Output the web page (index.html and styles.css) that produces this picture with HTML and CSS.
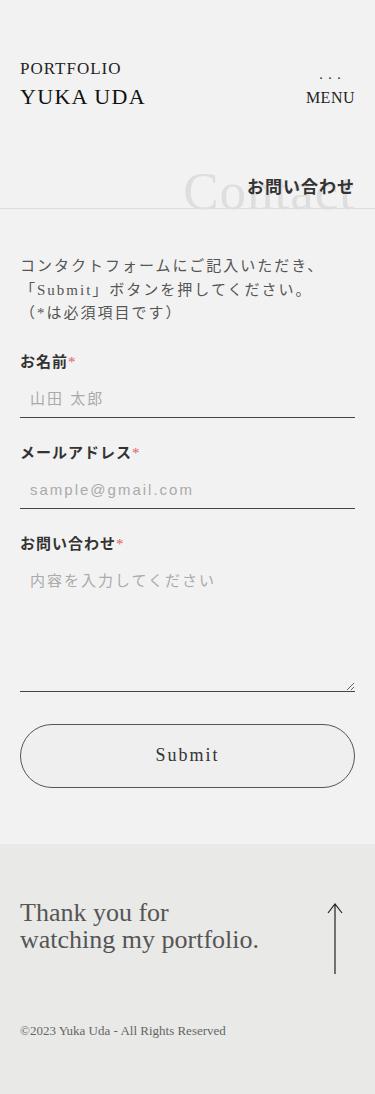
FILE: index.html
```html
<!DOCTYPE html>
<html lang="ja">
<head>
  <meta charset="UTF-8" />
  <title>Contact | YUKA UDA</title>
  <link rel="stylesheet" href="styles.css">
</head>
<body>

<header class="header">
  <div class="logo">
    <p class="logo-sub">PORTFOLIO</p>
    <p class="logo-name">YUKA UDA</p>
  </div>
  <div class="menu">
    <span class="menu-dots">. . .</span>
    <span class="menu-text">MENU</span>
  </div>
</header>

<section class="title">
  <div class="title-inner">
    <span class="title-en">Contact</span>
    <h1 class="title-ja">お問い合わせ</h1>
  </div>
</section>

<main class="contact">
  <p class="lead">コンタクトフォームにご記入いただき、<br>「Submit」ボタンを押してください。<br>（*は必須項目です）</p>

  <form class="form">
    <!-- name -->
    <label class="field">
      <span class="label">お名前<em>*</em></span>
      <input type="text" placeholder="山田 太郎" />
    </label>

    <!-- mail -->
    <label class="field">
      <span class="label">メールアドレス<em>*</em></span>
      <input type="email" placeholder="sample@gmail.com" />
    </label>

    <!-- message -->
    <label class="field">
      <span class="label">お問い合わせ<em>*</em></span>
      <textarea placeholder="内容を入力してください"></textarea>
    </label>

    <button type="button" class="btn">Submit</button>
  </form>
</main>

<footer class="footer">
  <div class="footer-top">
    <p class="thanks">Thank you for<br>watching my portfolio.</p>
    <a href="#" class="to-top">
      <svg width="16" height="72" viewBox="0 0 16 72">
        <path d="M8 1 V71 M1 10 L8 1 L15 10" fill="none" stroke="#222" stroke-width="1.2"/>
      </svg>
    </a>
  </div>
  <p class="copy">©2023 Yuka Uda - All Rights Reserved</p>
</footer>

</body>
</html>
```

FILE: styles.css
```css
* { box-sizing: border-box; }
body {
  margin: 0;
  background: #f2f2f2;
  color: #333;
  font-family: "Liberation Serif", "Noto Sans CJK JP", serif;
}
p { margin: 0; }

.header {
  display: flex;
  justify-content: space-between;
  align-items: flex-end;
  padding: 58px 20px 0;
  height: 110px;
}
.logo-sub {
  font-size: 17px;
  letter-spacing: 1px;
  color: #222;
  line-height: 20px;
}
.logo-name {
  font-size: 22px;
  letter-spacing: 1.3px;
  color: #111;
  line-height: 26px;
  margin-top: 5px;
}
.menu {
  display: flex;
  flex-direction: column;
  align-items: center;
  padding-bottom: 2px;
}
.menu-dots {
  font-size: 14px;
  letter-spacing: 1px;
  line-height: 14px;
  color: #222;
  margin-top: -3px;
}
.menu-text {
  font-size: 16px;
  line-height: 20px;
  margin-top: 6px;
  letter-spacing: 0.5px;
  color: #222;
}

.title {
  margin-top: 56px;
  border-bottom: 1px solid #dcdcdc;
}
.title-inner {
  position: relative;
  height: 42px;
  padding: 0 20px;
  display: flex;
  justify-content: flex-end;
}
.title-en {
  position: absolute;
  right: 20px;
  top: -1px;
  font-size: 53px;
  line-height: 53px;
  color: #dedede;
  letter-spacing: 1px;
}
.title-ja {
  position: relative;
  margin: 0;
  font-size: 17px;
  font-weight: bold;
  line-height: 22px;
  letter-spacing: 1px;
  color: #333;
  padding-top: 11px;
}

.contact {
  padding: 46px 20px 56px;
}
.lead {
  font-size: 15px;
  line-height: 23.5px;
  letter-spacing: 2px;
  color: #555;
}

.form {
  margin-top: 26px;
}
.field {
  display: block;
  margin-bottom: 25px;
}
.label {
  display: block;
  font-size: 15px;
  font-weight: bold;
  letter-spacing: 1px;
  color: #333;
  line-height: 20px;
}
.label em {
  font-style: normal;
  color: #e06060;
  font-weight: normal;
}
input, textarea {
  display: block;
  width: 100%;
  margin-top: 8px;
  padding: 8px 10px;
  background: transparent;
  border: none;
  border-bottom: 1.5px solid #444;
  font-family: "Liberation Sans", "Noto Sans CJK JP", sans-serif;
  font-size: 15px;
  letter-spacing: 2px;
  color: #333;
  outline: none;
}
input { height: 38px; }
textarea {
  height: 128px;
  margin-top: 10px;
  padding-top: 5px;
  resize: vertical;
}
::placeholder { color: #aaa; }

.btn {
  display: block;
  width: 100%;
  height: 64px;
  margin-top: 32px;
  border: 1px solid #555;
  border-radius: 32px;
  background: #efefef;
  font-family: "Liberation Serif", serif;
  font-size: 18px;
  letter-spacing: 2px;
  color: #333;
  cursor: pointer;
}

.footer {
  background: #e9e9e7;
  padding: 55px 20px 58px;
}
.footer-top {
  display: flex;
  justify-content: space-between;
  align-items: flex-start;
}
.thanks {
  font-size: 26px;
  line-height: 27px;
  color: #555;
}
.to-top {
  display: block;
  margin-right: 12px;
  margin-top: 4px;
}
.copy {
  margin-top: 44px;
  font-size: 13px;
  color: #666;
}
```
